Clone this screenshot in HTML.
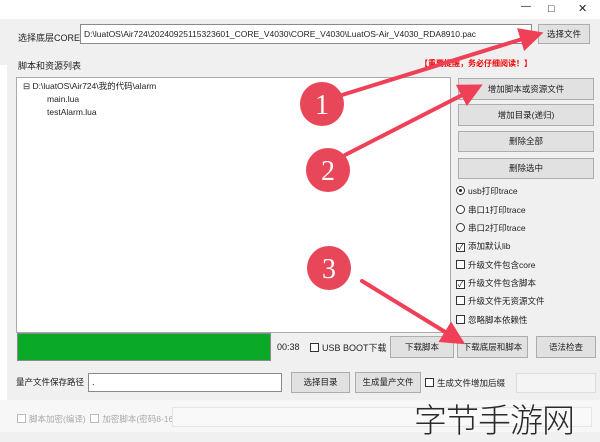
<!DOCTYPE html>
<html><head><meta charset="utf-8"><style>
*{box-sizing:border-box;margin:0;padding:0}
body{width:600px;height:432px;position:relative;overflow:hidden;background:#f0f0f0;font-family:"Liberation Sans","Noto Sans CJK SC",sans-serif;font-size:9px;color:#222}
.a{position:absolute}
.btn{position:absolute;background:#e1e1e1;border:1px solid #adadad;text-align:center;font-size:8.5px;color:#222}
.inp{position:absolute;background:#fff;border:1px solid #8a8a8a}
.cb{display:inline-block;width:9px;height:9px;border:1px solid #333;background:#fff;vertical-align:-1px;margin-right:3px;font-size:8px;line-height:7px;text-align:center}
.rd{display:inline-block;width:9px;height:9px;border:1px solid #333;border-radius:50%;background:#fff;vertical-align:-1px;margin-right:3px;position:relative}
.opt{position:absolute;left:456px;font-size:8.5px}
</style></head><body>
<div class="a" style="left:0;top:0;width:600px;height:19px;background:#fff"></div>
<div class="a" style="left:548px;top:3px;font-size:11px">□</div>
<div class="a" style="left:578px;top:2px;font-size:11px">✕</div>
<div class="a" style="left:521px;top:1px;font-size:10px">—</div>
<div class="a" style="left:0;top:65px;width:7px;height:335px;background:#fff"></div>
<div class="a" style="left:18px;top:31px">选择底层CORE</div>
<div class="inp" style="left:80px;top:24px;width:452px;height:20px;padding:4px 3px;font-size:8.5px">D:\luatOS\Air724\20240925115323601_CORE_V4030\CORE_V4030\LuatOS-Air_V4030_RDA8910.pac</div>
<div class="btn" style="left:538px;top:24px;width:52px;height:20px;line-height:18px">选择文件</div>
<div class="a" style="left:18px;top:59px">脚本和资源列表</div>
<div class="a" style="left:420px;top:58px;color:#e00;font-weight:bold;font-size:8px">【重要提醒，务必仔细阅读！】</div>
<div class="inp" style="left:16px;top:77px;width:435px;height:256px;border-color:#aaa"></div>
<div class="a" style="left:23px;top:80px;font-size:8.5px">⊟ D:\luatOS\Air724\我的代码\alarm</div>
<div class="a" style="left:47px;top:94px;font-size:8.5px">main.lua</div>
<div class="a" style="left:47px;top:107px;font-size:8.5px">testAlarm.lua</div>
<div class="btn" style="left:458px;top:78px;width:136px;height:22px;line-height:20px">增加脚本或资源文件</div>
<div class="btn" style="left:458px;top:104px;width:136px;height:22px;line-height:20px">增加目录(递归)</div>
<div class="btn" style="left:458px;top:131px;width:136px;height:21px;line-height:19px">删除全部</div>
<div class="btn" style="left:458px;top:158px;width:136px;height:21px;line-height:19px">删除选中</div>
<div class="opt" style="top:185px"><span class="rd"><span style="position:absolute;left:2px;top:2px;width:3px;height:3px;border-radius:50%;background:#222"></span></span>usb打印trace</div>
<div class="opt" style="top:204px"><span class="rd"></span>串口1打印trace</div>
<div class="opt" style="top:222px"><span class="rd"></span>串口2打印trace</div>
<div class="opt" style="top:240px"><span class="cb">✓</span>添加默认lib</div>
<div class="opt" style="top:259px"><span class="cb"></span>升级文件包含core</div>
<div class="opt" style="top:277px"><span class="cb">✓</span>升级文件包含脚本</div>
<div class="opt" style="top:295px"><span class="cb"></span>升级文件无资源文件</div>
<div class="opt" style="top:314px"><span class="cb"></span>忽略脚本依赖性</div>
<div class="a" style="left:17px;top:333px;width:254px;height:28px;background:#0aaa28;border:1px solid #8a8a8a"></div>
<div class="a" style="left:277px;top:342px">00:38</div>
<div class="a" style="left:310px;top:341px"><span class="cb"></span>USB BOOT下载</div>
<div class="btn" style="left:390px;top:336px;width:64px;height:22px;line-height:20px">下载脚本</div>
<div class="btn" style="left:457px;top:336px;width:71px;height:22px;line-height:20px">下载底层和脚本</div>
<div class="btn" style="left:536px;top:336px;width:60px;height:22px;line-height:20px">语法检查</div>
<div class="a" style="left:16px;top:376px;font-size:8.5px">量产文件保存路径</div>
<div class="inp" style="left:88px;top:373px;width:194px;height:19px;padding:3px 3px">.</div>
<div class="btn" style="left:291px;top:372px;width:59px;height:21px;line-height:19px">选择目录</div>
<div class="btn" style="left:355px;top:372px;width:66px;height:21px;line-height:19px">生成量产文件</div>
<div class="a" style="left:425px;top:377px;font-size:8.5px"><span class="cb"></span>生成文件增加后缀</div>
<div class="a" style="left:516px;top:373px;width:80px;height:20px;background:#f4f4f4;border:1px solid #ddd"></div>
<div class="a" style="left:0;top:400px;width:600px;height:32px;background:#f7f7f7"></div>
<div class="a" style="left:17px;top:413px;color:#aaa;font-size:8.5px"><span class="cb" style="border-color:#bbb"></span>脚本加密(编译) &nbsp;<span class="cb" style="border-color:#bbb"></span>加密脚本(密码8-16字节)</div>
<div class="a" style="left:172px;top:407px;width:420px;height:20px;border:1px solid #e6e6e6;background:#f9f9f9"></div>
<div class="a" style="left:414px;top:394px;font-size:33px;color:#2a2a2a;font-family:'Noto Sans CJK SC',sans-serif;font-weight:300;letter-spacing:-1px">字节手游网</div>
<svg class="a" style="left:0;top:0" width="600" height="432">
<defs><marker id="m" markerWidth="6" markerHeight="6" refX="3" refY="3" orient="auto"><path d="M0,0 L6,3 L0,6 z" fill="#ef4058"/></marker></defs>
<g stroke="#ef4058" stroke-width="4" fill="none" stroke-linecap="round">
<line x1="342" y1="95" x2="532" y2="36" marker-end="url(#m)"/>
<line x1="345" y1="155" x2="472" y2="90" marker-end="url(#m)"/>
<line x1="362" y1="281" x2="455" y2="338" marker-end="url(#m)"/>
</g>
<g fill="#e8475a"><circle cx="322" cy="104" r="22"/><circle cx="328" cy="170" r="22"/><circle cx="329" cy="268" r="22"/></g>
<g fill="#fff" font-family="Liberation Serif,serif" font-size="28" text-anchor="middle"><text x="322" y="114">1</text><text x="328" y="180">2</text><text x="329" y="278">3</text></g>
</svg>
</body></html>
